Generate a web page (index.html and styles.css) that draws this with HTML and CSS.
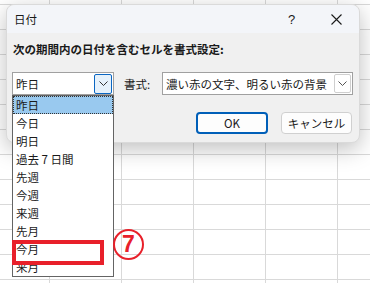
FILE: index.html
```
<!DOCTYPE html>
<html lang="ja">
    <head>
        <meta charset="UTF-8" />
        <title>日付</title>
        <link rel="stylesheet" href="styles.css">
    </head>
    <body>
        <div class="dialog">
            <div class="title-bar">
                <span class="title">日付</span>
                <span class="title-btn">?</span>
                <span class="title-btn">
                    <svg width="11" height="11" viewBox="0 0 11 11"><path d="M0.5 0.5 L10.5 10.5 M10.5 0.5 L0.5 10.5" stroke="#1a1a1a" stroke-width="1.1" fill="none"/></svg>
                </span>
            </div>
            <div class="dialog-body">
                <div class="heading">次の期間内の日付を含むセルを書式設定:</div>
                <div class="field-row">
                    <div class="combo period">
                        <span class="combo-text">昨日</span>
                        <span class="combo-btn focus">
                            <svg width="9" height="5" viewBox="0 0 9 5"><path d="M0.5 0.5 L4.5 4.5 L8.5 0.5" stroke="#333" fill="none"/></svg>
                        </span>
                        <ul class="drop-list">
                            <li class="active">昨日</li>
                            <li>今日</li>
                            <li>明日</li>
                            <li>過去 7 日間</li>
                            <li>先週</li>
                            <li>今週</li>
                            <li>来週</li>
                            <li>先月</li>
                            <li>今月</li>
                            <li>来月</li>
                        </ul>
                        <div class="mark-box"></div>
                        <div class="mark-num">7</div>
                    </div>
                    <span class="field-label">書式:</span>
                    <div class="combo format">
                        <span class="combo-text">濃い赤の文字、明るい赤の背景</span>
                        <span class="combo-btn">
                            <svg width="9" height="5" viewBox="0 0 9 5"><path d="M0.5 0.5 L4.5 4.5 L8.5 0.5" stroke="#555" fill="none"/></svg>
                        </span>
                    </div>
                </div>
                <div class="button-row">
                    <button class="btn primary">OK</button>
                    <button class="btn">キャンセル</button>
                </div>
            </div>
        </div>
    </body>
</html>
```

FILE: styles.css
```
body {
    margin: 0;
    font-family: "Noto Sans CJK JP", "Noto Sans", sans-serif;
    font-size: 11.5px;
    color: #1a1a1a;
    background-color: #fff;
    background-image:
        linear-gradient(to right, #d9d9d9 1px, transparent 1px),
        linear-gradient(to bottom, #d9d9d9 1px, transparent 1px);
    background-size: 72px 25px;
    background-position: 49px 4px;
    height: 283px;
    overflow: hidden;
}

.dialog {
    width: 354px;
    height: 139px;
    margin: 4px 0 0 6px;
    background: #f0f0f0;
    border: 1px solid #dadada;
    box-sizing: border-box;
    border-radius: 8px;
    box-shadow: 0 6px 22px rgba(0, 0, 0, 0.25);
}

.title-bar {
    display: flex;
    align-items: center;
    height: 28px;
    background: #f3f5f9;
    border-radius: 8px 8px 0 0;
}

.title {
    flex: 1;
    padding-left: 7px;
}

.title-btn {
    width: 45px;
    font-family: "Liberation Sans", sans-serif;
    font-size: 13px;
    display: flex;
    justify-content: center;
}

.dialog-body {
    padding: 0 6px 0 5px;
}

.heading {
    font-weight: bold;
    line-height: 16px;
    margin-top: 8px;
    padding-left: 1px;
    white-space: nowrap;
}

.field-row {
    display: flex;
    align-items: center;
    margin-top: 15px;
}

.combo {
    position: relative;
    height: 23px;
    box-sizing: border-box;
    background: #fff;
    border: 1px solid #a0a0a0;
    display: flex;
    align-items: center;
}

.combo-text {
    flex: 1;
    padding-left: 3px;
    white-space: nowrap;
    overflow: hidden;
}

.combo-btn {
    width: 15px;
    height: 17px;
    margin-right: 1px;
    border: 1px solid #cfcfcf;
    border-radius: 2px;
    display: flex;
    align-items: center;
    justify-content: center;
}

.combo-btn.focus {
    width: 16px;
    height: 18px;
    border-color: #0a66c2;
    background: #e5f1fb;
}

.period {
    width: 102px;
}

.format {
    width: 191px;
}

.field-label {
    flex: 1;
    padding-left: 10px;
}

.drop-list {
    position: absolute;
    top: 22px;
    left: -1px;
    width: 102px;
    margin: 0;
    padding: 0;
    list-style: none;
    background: #fff;
    border: 1px solid #646464;
    box-sizing: border-box;
}

.drop-list li {
    height: 18px;
    line-height: 18px;
    padding-left: 3px;
    box-sizing: border-box;
}

.drop-list li.active {
    background: #99c9ef;
    outline: 1px dotted #333;
    outline-offset: -1px;
}

.mark-box {
    position: absolute;
    left: -1px;
    top: 167px;
    width: 92px;
    height: 25px;
    border: 4px solid #e8202a;
    box-sizing: border-box;
}

.mark-num {
    position: absolute;
    left: 100px;
    top: 156px;
    width: 31px;
    height: 31px;
    border: 2px solid #e8202a;
    border-radius: 50%;
    box-sizing: border-box;
    color: #e8202a;
    font-family: "Liberation Sans", sans-serif;
    font-weight: bold;
    font-size: 23px;
    line-height: 27px;
    text-align: center;
}

.button-row {
    display: flex;
    justify-content: flex-end;
    gap: 13px;
    margin-top: 17px;
    padding-right: 1px;
}

.btn {
    width: 71px;
    height: 22px;
    padding: 0;
    font-family: "Noto Sans CJK JP", "Noto Sans", sans-serif;
    font-size: 11.5px;
    color: #1a1a1a;
    background: #fdfdfd;
    border: 1px solid #d0d0d0;
    border-radius: 4px;
}

.btn.primary {
    width: 72px;
    border: 2px solid #005fb8;
}
```
